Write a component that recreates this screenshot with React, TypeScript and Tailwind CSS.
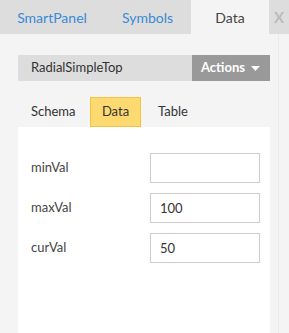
import { useState } from "react";

const FIELDS = [
  { name: "minVal", value: "" },
  { name: "maxVal", value: "100" },
  { name: "curVal", value: "50" },
];

export default function App() {
  const [sub, setSub] = useState("Data");
  const [vals, setVals] = useState(FIELDS.map((f) => f.value));

  return (
    <div className="flex h-[333px] w-[289px] flex-col overflow-hidden bg-[#f4f4f4] font-['Lato',sans-serif] text-[13px] text-[#333]">
      <div className="flex h-[34px] shrink-0 bg-[#dddddd] text-[14px]">
        <div className="flex w-[104px] items-center justify-center text-[#3a8ad6]">SmartPanel</div>
        <div className="flex w-[87px] items-center justify-center text-[#3a8ad6]">Symbols</div>
        <div className="flex w-[78px] items-center justify-center bg-[#f4f4f4] text-[#444]">Data</div>
        <div className="flex w-[20px] items-center justify-center text-[15px] font-bold text-[#bbb]">X</div>
      </div>

      <div className="flex flex-1">
        <div className="flex w-[279px] flex-col border-r border-[#ececec] pl-[18px] pr-[8px] pt-[21px]">
          <div className="flex h-[26px]">
            <div className="flex flex-1 items-center bg-[#dddddd] pl-[13px]">RadialSimpleTop</div>
            <div className="flex w-[78px] items-center justify-between bg-[#999999] pl-[9px] pr-[10px] font-bold text-white">
              Actions
              <svg width="9" height="5" viewBox="0 0 9 5">
                <path d="M0 0h9L4.5 5z" fill="white" />
              </svg>
            </div>
          </div>

          <div className="mt-[16px] flex h-[30px]">
            {["Schema", "Data", "Table"].map((t, i) => (
              <button
                key={t}
                type="button"
                onClick={() => setSub(t)}
                className={
                  (sub === t
                    ? "border border-[#f5c242] bg-[#fdd972] "
                    : "border border-transparent ") +
                  (i === 0
                    ? "w-[72px] pl-[12px] text-left"
                    : i === 1
                      ? "w-[51px] text-center"
                      : "pl-[16px] text-left")
                }
              >
                {t}
              </button>
            ))}
          </div>

          <div className="flex flex-1 flex-col gap-[10px] bg-white pl-[13px] pt-[26px]">
            {FIELDS.map((f, i) => (
              <label key={f.name} className="flex h-[30px] items-center text-[#444]">
                <span className="w-[119px]">{f.name}</span>
                <input
                  value={vals[i]}
                  onChange={(e) => setVals(vals.map((v, j) => (j === i ? e.target.value : v)))}
                  className="h-[30px] w-[110px] border border-[#cccccc] bg-white px-[9px] text-[13px] text-[#333] outline-none"
                />
              </label>
            ))}
          </div>
        </div>
      </div>
    </div>
  );
}
